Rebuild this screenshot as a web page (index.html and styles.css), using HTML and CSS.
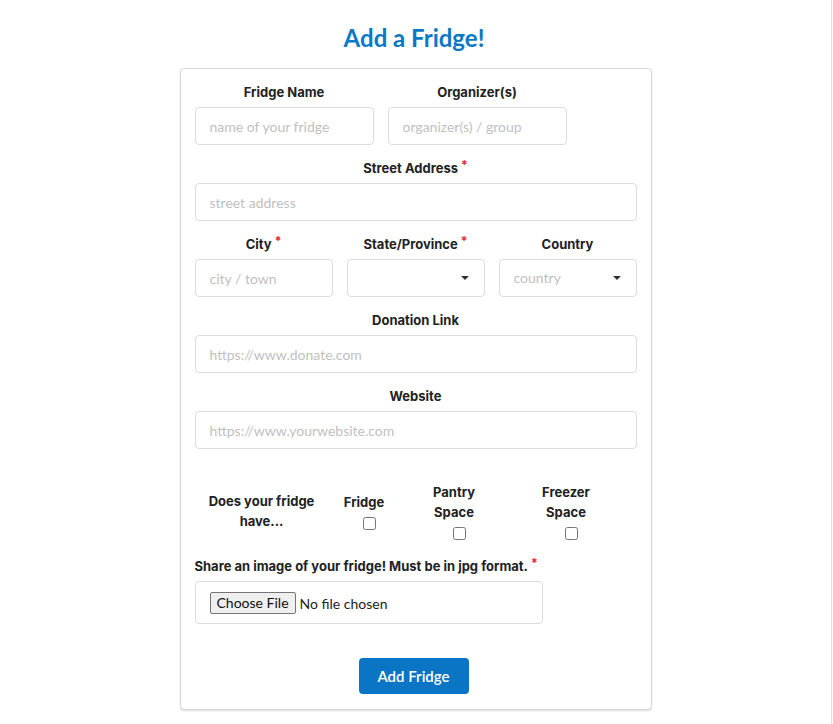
FILE: index.html
```html
<!DOCTYPE html>
<html lang="en">
<head>
<meta charset="utf-8">
<title>Add a Fridge!</title>
<link rel="stylesheet" href="styles.css">
</head>
<body>
<div class="page">
  <h1 class="title">Add a Fridge!</h1>
  <form class="card">
    <div class="row row-two">
      <div class="field">
        <label class="label">Fridge Name</label>
        <input class="input" type="text" placeholder="name of your fridge">
      </div>
      <div class="field">
        <label class="label">Organizer(s)</label>
        <input class="input" type="text" placeholder="organizer(s) / group">
      </div>
    </div>

    <div class="field spaced">
      <label class="label">Street Address<span class="req">*</span></label>
      <input class="input" type="text" placeholder="street address">
    </div>

    <div class="row row-three spaced">
      <div class="field">
        <label class="label">City<span class="req">*</span></label>
        <input class="input" type="text" placeholder="city / town">
      </div>
      <div class="field">
        <label class="label">State/Province<span class="req">*</span></label>
        <div class="select-wrap">
          <select class="select"><option value=""></option></select>
        </div>
      </div>
      <div class="field">
        <label class="label">Country</label>
        <div class="select-wrap">
          <select class="select select-empty"><option value="">country</option></select>
        </div>
      </div>
    </div>

    <div class="field spaced">
      <label class="label">Donation Link</label>
      <input class="input" type="text" placeholder="https://www.donate.com">
    </div>

    <div class="field spaced">
      <label class="label">Website</label>
      <input class="input" type="text" placeholder="https://www.yourwebsite.com">
    </div>

    <div class="checks">
      <div class="check-col">
        <span class="check-text">Does your fridge<br>have...</span>
      </div>
      <div class="check-col">
        <span class="check-text">Fridge</span>
        <input class="checkbox" type="checkbox">
      </div>
      <div class="check-col">
        <span class="check-text">Pantry<br>Space</span>
        <input class="checkbox" type="checkbox">
      </div>
      <div class="check-col">
        <span class="check-text">Freezer<br>Space</span>
        <input class="checkbox" type="checkbox">
      </div>
    </div>

    <label class="label label-left">Share an image of your fridge! Must be in jpg format.<span class="req">*</span></label>
    <div class="file-box">
      <input class="file" type="file">
    </div>

    <div class="actions">
      <button class="submit" type="button">Add Fridge</button>
    </div>
  </form>
</div>
</body>
</html>
```

FILE: styles.css
```css
* { box-sizing: border-box; }

html, body {
  margin: 0;
  padding: 0;
  background: #ffffff;
}

body {
  font-family: Lato, "Noto Sans", sans-serif;
  color: #222222;
}

.page {
  width: 832px;
  min-height: 724px;
  border-right: 1px solid #dedede;
  padding-top: 23px;
}

.title {
  margin: 0;
  font-family: Lato, sans-serif;
  font-weight: 700;
  font-size: 24px;
  line-height: 29px;
  color: #0b78c6;
  text-align: center;
  padding-right: 3px;
}

.card {
  width: 472px;
  margin: 16px auto 0;
  border: 1px solid #d9d9d9;
  border-radius: 4px;
  box-shadow: 0 1px 2px rgba(0, 0, 0, 0.14);
  padding: 14px 14px 15px;
  background: #fff;
}

.row {
  display: flex;
  gap: 14px;
}

.row-two .field { width: 179px; }
.row-three .field { flex: 1; }

.field {
  display: flex;
  flex-direction: column;
}

.spaced { margin-top: 14px; }

.label {
  display: block;
  font-family: Inter, "Liberation Sans", sans-serif;
  font-weight: 700;
  font-size: 13px;
  line-height: 18px;
  color: #222222;
  text-align: center;
  margin-bottom: 6px;
}

.label-left {
  text-align: left;
  margin-top: 17px;
}

.req {
  color: #ec1c24;
  font-size: 12px;
  margin-left: 3px;
  vertical-align: 4px;
  line-height: 0;
}

.input,
.select {
  width: 100%;
  height: 38px;
  border: 1px solid #dcdcdc;
  border-radius: 4px;
  padding: 0 14px;
  font-family: Lato, sans-serif;
  font-size: 14px;
  line-height: 36px;
  color: #222;
  background: #fff;
  outline: none;
}

.input::placeholder { color: #bfbfbf; }

.select {
  appearance: none;
  -webkit-appearance: none;
}

.select-empty { color: #bfbfbf; }

.select-wrap {
  position: relative;
}

.select-wrap::after {
  content: "";
  position: absolute;
  right: 16px;
  top: 17px;
  border-left: 4.5px solid transparent;
  border-right: 4.5px solid transparent;
  border-top: 4.5px solid #333;
  pointer-events: none;
}

.checks {
  display: grid;
  grid-template-columns: 134px 71px 109px 115px;
  align-items: center;
  margin-top: 33px;
}

.check-col {
  display: flex;
  flex-direction: column;
  text-align: center;
}

.check-text {
  font-family: Inter, "Liberation Sans", sans-serif;
  font-weight: 700;
  font-size: 13px;
  line-height: 20px;
  color: #222;
}

.checkbox {
  display: block;
  width: 13px;
  height: 13px;
  margin: 5px 0 0 calc(50% - 1.5px);
}

.file-box {
  width: 348px;
  height: 43px;
  border: 1px solid #dcdcdc;
  border-radius: 4px;
  padding: 0 14px;
  display: flex;
  align-items: center;
}

.file {
  font-family: Lato, sans-serif;
  font-size: 14px;
  color: #222;
}

.file::file-selector-button {
  font-family: Lato, sans-serif;
  font-size: 14px;
  color: #111;
  height: 22px;
  padding: 0 6px;
  margin-right: 4px;
  border: 1px solid #767676;
  border-radius: 2px;
  background: #efefef;
}

.actions {
  display: flex;
  justify-content: center;
  margin-top: 34px;
  padding-right: 4px;
}

.submit {
  width: 110px;
  height: 36px;
  border: none;
  border-radius: 4px;
  background: #0a75c4;
  color: #ffffff;
  font-family: Lato, sans-serif;
  font-weight: 600;
  font-size: 15px;
  cursor: pointer;
}
```
